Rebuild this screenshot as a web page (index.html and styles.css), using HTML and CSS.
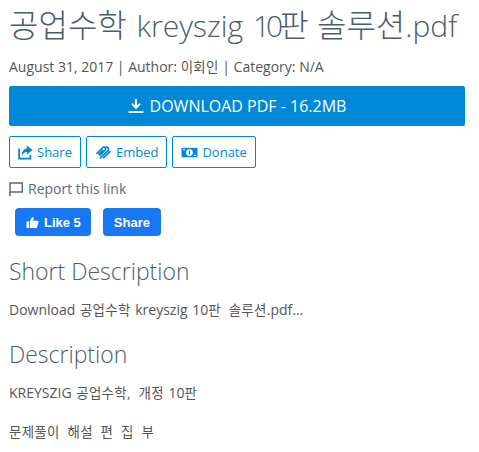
FILE: index.html
```html
<!DOCTYPE html>
<html lang="ko">
<head>
  <meta charset="UTF-8">
  <title>공업수학 kreyszig 10판 솔루션.pdf</title>
  <meta name="viewport" content="width=device-width, initial-scale=1.0">
  <link rel="stylesheet" href="styles.css">
</head>
<body>
  <div class="container">
    <h1><span class="ko">공업수학</span> kreyszig <span class="num">10</span><span class="ko">판 솔루션</span>.pdf</h1>
    <p class="meta">August 31, 2017 | Author: <span class="ko">이회인</span> | Category: N/A</p>

    <a class="btn-download" href="#">
      <svg class="icon-download" viewBox="0 0 16 16" aria-hidden="true">
        <path d="M8 1v8.5M3.8 5.6 8 9.8l4.2-4.2" fill="none" stroke="#fff" stroke-width="2"/>
        <path d="M0.5 14h15" stroke="#fff" stroke-width="1.8"/>
      </svg>
      DOWNLOAD PDF - 16.2MB
    </a>

    <div class="actions">
      <a class="btn-outline" href="#">
        <svg class="icon" viewBox="0 0 16 16" aria-hidden="true">
          <path d="M1.2 4v10.6h12V10.5" fill="none" stroke="#0088d8" stroke-width="1.9"/>
          <path d="M9.4 0.6 15.6 5.4 9.4 10.2V7.4C7 7.4 5.4 8.6 4.2 11.6 4 7 6 4 9.4 3.6Z" fill="#0088d8"/>
        </svg>
        Share
      </a>
      <a class="btn-outline" href="#">
        <svg class="icon icon-embed" viewBox="0 0 18 16" aria-hidden="true">
          <path d="M1.4 9.4 7.8 3.2C10 1.2 12.4 3.6 10.6 5.6L6 10.2C5 11.2 3.8 10 4.8 9L8.8 5.2M5.2 14.2 13.8 6C15.6 4 13.4 1.4 11.2 2.4M8.6 14 16.6 6.6" fill="none" stroke="#0088d8" stroke-width="1.8"/>
        </svg>
        Embed
      </a>
      <a class="btn-outline" href="#">
        <svg class="icon icon-donate" viewBox="0 0 18 16" aria-hidden="true">
          <path d="M0.5 3h17v10H0.5Z" fill="#0088d8"/>
          <circle cx="9" cy="8" r="3.6" fill="#fff"/>
          <path d="M2 5h2.4M13.6 11h2.4" stroke="#fff" stroke-width="1.2"/>
          <path d="M9 6v4" stroke="#0088d8" stroke-width="1.3"/>
        </svg>
        Donate
      </a>
    </div>

    <a class="report" href="#">
      <svg class="icon-flag" viewBox="0 0 14 14" aria-hidden="true">
        <path d="M1 14V1h12.3v9H1" fill="none" stroke="#5a6b7d" stroke-width="1.5"/>
      </svg>
      Report this link
    </a>

    <div class="social">
      <a class="btn-fb" href="#">
        <svg class="icon-like" viewBox="0 0 14 14" aria-hidden="true">
          <path d="M0.5 6h2.6v7H0.5ZM4 6 6.6 1.2C7.8 1 8.6 2 8.2 3.2L7.6 5.2H12.4C13.4 5.2 13.8 6.2 13.4 7L11.8 12.4C11.6 13 11.2 13 10.6 13H4Z" fill="#fff"/>
        </svg>
        Like 5
      </a>
      <a class="btn-fb" href="#">Share</a>
    </div>

    <h3>Short Description</h3>
    <p class="desc">Download <span class="ko">공업수학</span> kreyszig 10<span class="ko">판 솔루션</span>.pdf...</p>

    <h3>Description</h3>
    <p class="desc">KREYSZIG <span class="ko">공업수학, 개정</span> 10<span class="ko">판</span></p>
    <p class="desc gap"><span class="ko">문제풀이 해설 편 집 부</span></p>
  </div>
</body>
</html>
```

FILE: styles.css
```css
* {
  margin: 0;
  padding: 0;
  box-sizing: border-box;
}

body {
  font-family: "Open Sans", "Noto Sans CJK KR", sans-serif;
  font-size: 14px;
  color: #555;
  background: #fff;
  overflow: hidden;
}

a {
  text-decoration: none;
}

.container {
  padding: 0 14px 0 9px;
}

.ko {
  font-size: 0.96em;
  letter-spacing: 0.3px;
  word-spacing: 0.3em;
}

h1 {
  font-size: 30px;
  font-weight: 300;
  line-height: 38px;
  color: #4e5d6c;
  white-space: nowrap;
  word-spacing: 2px;
  padding-top: 7px;
  margin-bottom: 12px;
}

h1 .ko {
  font-size: 32px;
  line-height: 1;
  letter-spacing: 0;
  word-spacing: 0;
}

.num {
  letter-spacing: -4px;
}

.meta {
  line-height: 20px;
  margin-bottom: 9px;
}

.btn-download {
  display: flex;
  align-items: center;
  justify-content: center;
  gap: 6px;
  height: 40px;
  background: #0088d8;
  border-radius: 2px;
  color: #fff;
  font-size: 16px;
}

.icon-download {
  width: 16px;
  height: 16px;
}

.actions {
  display: flex;
  gap: 5px;
  margin-top: 10px;
}

.btn-outline {
  display: flex;
  align-items: center;
  gap: 4px;
  height: 32px;
  padding: 0 8px;
  border: 1px solid #0088d8;
  border-radius: 2px;
  color: #0088d8;
  font-size: 13px;
}

.icon {
  width: 15px;
  height: 15px;
}

.icon-embed,
.icon-donate {
  width: 17px;
}

.report {
  display: flex;
  align-items: center;
  gap: 5px;
  margin-top: 11px;
  line-height: 20px;
  font-size: 14px;
  color: #5a6b7d;
}

.icon-flag {
  width: 14px;
  height: 14px;
}

.social {
  display: flex;
  gap: 12px;
  margin: 9px 0 0 6px;
}

.btn-fb {
  display: flex;
  align-items: center;
  gap: 5px;
  height: 28px;
  padding: 0 11px;
  background: #1877f2;
  border-radius: 4px;
  color: #fff;
  font-family: "Liberation Sans", sans-serif;
  font-size: 13px;
  font-weight: bold;
}

.btn-fb:first-child {
  padding-right: 10px;
}

.icon-like {
  width: 13px;
  height: 13px;
}

h3 {
  font-size: 23px;
  font-weight: 300;
  line-height: 28px;
  color: #4e5d6c;
  margin-top: 21px;
}

.desc {
  line-height: 20px;
  word-spacing: 1px;
  margin-top: 15px;
}

.desc + h3 {
  margin-top: 20px;
}

.desc.gap {
  margin-top: 19px;
}
```
